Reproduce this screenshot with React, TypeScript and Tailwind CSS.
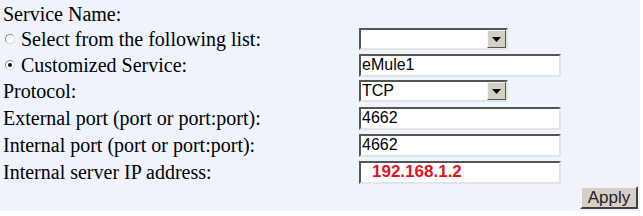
import React from 'react';

const serif = { fontFamily: '"Liberation Serif", "Times New Roman", serif' };
const sans = { fontFamily: '"Liberation Sans", Arial, sans-serif' };

const Radio: React.FC<{ checked?: boolean }> = ({ checked }) => (
  <span className="mr-[6px] ml-[2px] inline-flex h-[10px] w-[10px] items-center justify-center rounded-full border border-t-[#8a8a8a] border-l-[#8a8a8a] border-r-[#d8d8d8] border-b-[#d8d8d8] bg-white">
    {checked && <span className="h-[4px] w-[4px] rounded-full bg-[#111]" />}
  </span>
);

const inset =
  'border-2 border-t-[#555] border-l-[#555] border-r-[#e4e4e4] border-b-[#e4e4e4] bg-white';

const TextBox: React.FC<{ value: string; highlight?: boolean }> = ({ value, highlight }) => (
  <div
    className={`${inset} flex h-[23px] w-[202px] items-center ${
      highlight ? 'pl-[11px] text-[17px] font-bold text-[#e0141c]' : 'pl-px text-[16px] text-black'
    }`}
    style={sans}
  >
    {value}
  </div>
);

const SelectBox: React.FC<{ value?: string }> = ({ value }) => (
  <div
    className={`${inset} flex h-[22px] w-[149px] items-center justify-between pl-px text-[16px] text-black`}
    style={sans}
  >
    <span>{value}</span>
    <span className="flex h-[18px] w-[19px] items-center justify-center border border-t-[#f4f4f4] border-l-[#f4f4f4] border-r-[#555] border-b-[#555] bg-[#d4d0c8]">
      <svg width="9" height="5" viewBox="0 0 9 5">
        <path d="M0 0h9L4.5 5z" fill="#000" />
      </svg>
    </span>
  </div>
);

const Row: React.FC<{ label: React.ReactNode; className?: string; children?: React.ReactNode }> = ({
  label,
  className,
  children,
}) => (
  <div className={`flex h-[22px] items-center ${className ?? ''}`}>
    <div className="flex w-[356px] items-center text-[20px] leading-none text-black" style={serif}>
      {label}
    </div>
    {children}
  </div>
);

export default function App() {
  return (
    <div className="h-[216px] w-[643px] bg-white">
      <div className="flex h-[211px] w-[640px] flex-col bg-[#eff3fb] pl-[3px]">
        <Row label="Service Name:" className="mt-[3px]" />
        <Row
          className="mt-[3px]"
          label={
            <>
              <Radio />
              Select from the following list:
            </>
          }
        >
          <SelectBox />
        </Row>
        <Row
          className="mt-[4px]"
          label={
            <>
              <Radio checked />
              Customized Service:
            </>
          }
        >
          <TextBox value="eMule1" />
        </Row>
        <Row label="Protocol:" className="mt-[4px]">
          <SelectBox value="TCP" />
        </Row>
        <Row label="External port (port or port:port):" className="mt-[5px]">
          <TextBox value="4662" />
        </Row>
        <Row label="Internal port (port or port:port):" className="mt-[5px]">
          <TextBox value="4662" />
        </Row>
        <Row label="Internal server IP address:" className="mt-[5px]">
          <TextBox value="192.168.1.2" highlight />
        </Row>
        <div className="mt-[3px] flex justify-end pr-[2px]">
          <button
            className="flex h-[23px] w-[58px] items-center justify-center border-2 border-t-[#f4f4f4] border-l-[#f4f4f4] border-r-[#404040] border-b-[#404040] bg-[#d4d0c8] text-[17px] leading-none text-[#222]"
            style={sans}
          >
            Apply
          </button>
        </div>
      </div>
    </div>
  );
}
